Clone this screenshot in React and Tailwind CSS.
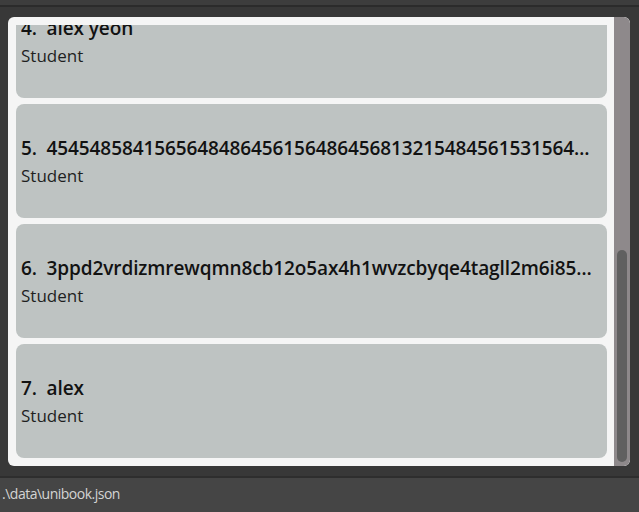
const PEOPLE = [
  { idx: 4, name: 'alex yeon', role: 'Student' },
  { idx: 5, name: '4545485841565648486456156486456813215484561531564…', role: 'Student' },
  { idx: 6, name: '3ppd2vrdizmrewqmn8cb12o5ax4h1wvzcbyqe4tagll2m6i85…', role: 'Student' },
  { idx: 7, name: 'alex', role: 'Student' },
];

function PersonCard({ person }) {
  return (
    <div className="h-[114px] shrink-0 rounded-[8px] bg-[#bec3c2] pl-[5px] pr-[10px] pt-[31px]">
      <div className="whitespace-nowrap overflow-hidden text-[19px] leading-[26px] font-semibold text-[#121212] tracking-[-0.1px]">
        {person.idx}.&nbsp;&nbsp;{person.name}
      </div>
      <div className="mt-[3px] text-[17px] leading-[24px] text-[#1f1f1f]">{person.role}</div>
    </div>
  );
}

export default function App() {
  return (
    <div
      className="w-[639px] h-[512px] bg-[#383838] flex flex-col overflow-hidden"
      style={{ fontFamily: '"Open Sans", "Noto Sans", sans-serif' }}
    >
      {/* window top strip */}
      <div className="h-[5px] bg-[#3d3d3d]" />
      <div className="h-[2px] bg-[#2b2b2b]" />

      {/* list panel */}
      <div className="flex-1 pl-[8px] pr-[9px] pt-[10px] pb-[10px]">
        <div className="h-[449px] rounded-[6px] bg-[#f5f5f5] flex overflow-hidden">
          <div className="flex-1 min-w-0 pl-[8px] pr-[7px] pt-[8px] pb-[7px]">
            <div className="h-full overflow-hidden">
              <div className="flex flex-col gap-[6px] mt-[-41px]">
                {PEOPLE.map((p) => (
                  <PersonCard key={p.idx} person={p} />
                ))}
              </div>
            </div>
          </div>
          {/* scrollbar */}
          <div className="w-[16px] shrink-0 bg-[#8e898b] rounded-tr-[6px] rounded-br-[6px] pt-[233px] pb-[4px] px-[3px]">
            <div className="h-full rounded-[5px] bg-[#606060]" />
          </div>
        </div>
      </div>

      {/* status bar */}
      <div className="h-[2px] bg-[#2e2e2e]" />
      <div className="h-[34px] bg-[#454545] pl-[2px] pt-[6px] text-[14px] leading-[20px] text-[#d4d4d4] tracking-[-0.5px]">
        .\data\unibook.json
      </div>
    </div>
  );
}
